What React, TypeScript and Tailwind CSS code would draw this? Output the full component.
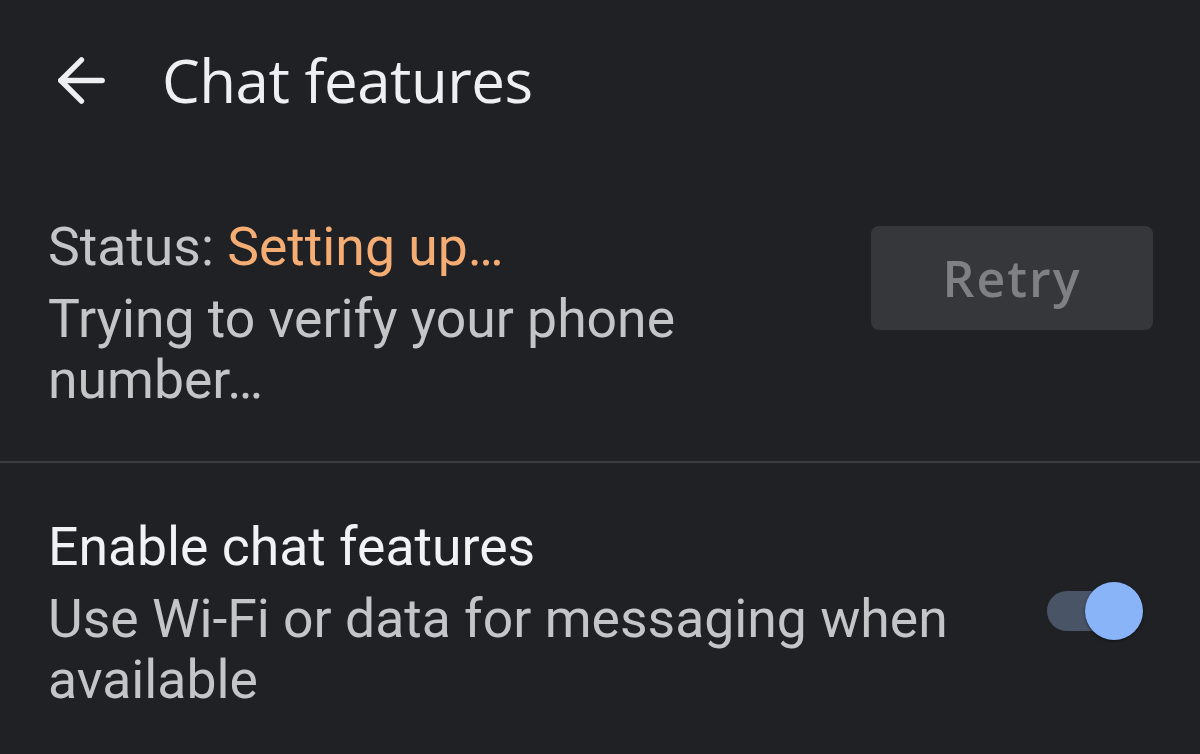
import React, { useState } from "react";

export default function App() {
  const [enabled, setEnabled] = useState(true);

  return (
    <div className="w-[1200px] h-[754px] bg-[#202124] overflow-hidden font-['Roboto',sans-serif]">
      {/* top bar */}
      <div className="flex items-center h-[160px] pl-[46px]">
        <svg
          width="71"
          height="71"
          viewBox="0 0 24 24"
          fill="none"
          stroke="#eeeff1"
          strokeWidth="1.8"
          strokeLinecap="round"
          strokeLinejoin="round"
        >
          <path d="M19 12H5" />
          <path d="M12 19l-7-7 7-7" />
        </svg>
        <h1 className="ml-[45px] text-[60px] text-[#eeeff1] font-['Open_Sans',sans-serif] tracking-[-0.5px]">
          Chat features
        </h1>
      </div>

      {/* status row */}
      <div className="flex items-start justify-between pl-[48px] pr-[47px] pt-[56px] h-[301px]">
        <div className="w-[720px] text-[53.5px] leading-[61px] text-[#c4c5c7]">
          <div className="mb-[11px]">
            Status: <span className="text-[#f5ad73]">Setting up…</span>
          </div>
          <div>Trying to verify your phone number…</div>
        </div>
        <button className="mt-[10px] w-[282px] h-[104px] rounded-[8px] bg-[#36373a] text-[#7f8083] text-[50px] font-semibold font-['Open_Sans',sans-serif] tracking-[2px]">
          Retry
        </button>
      </div>

      <div className="h-[2px] bg-[#3c3d40]" />

      {/* enable row */}
      <div className="flex items-start justify-between pl-[48px] pr-[57px] pt-[53px]">
        <div className="w-[940px] text-[53.5px] leading-[61px]">
          <div className="mb-[11px] text-[#f1f2f3]">Enable chat features</div>
          <div className="text-[#c4c5c7]">Use Wi-Fi or data for messaging when available</div>
        </div>
        <button
          onClick={() => setEnabled(!enabled)}
          className="relative mt-[66px] w-[96px] h-[58px] shrink-0"
        >
          <span className="absolute left-0 top-[9px] w-[63px] h-[40px] rounded-full bg-[#4a5467]" />
          <span className="absolute right-0 top-0 w-[58px] h-[58px] rounded-full bg-[#8ab4f8] shadow-[0_1px_3px_rgba(0,0,0,0.5)]" />
        </button>
      </div>
    </div>
  );
}
